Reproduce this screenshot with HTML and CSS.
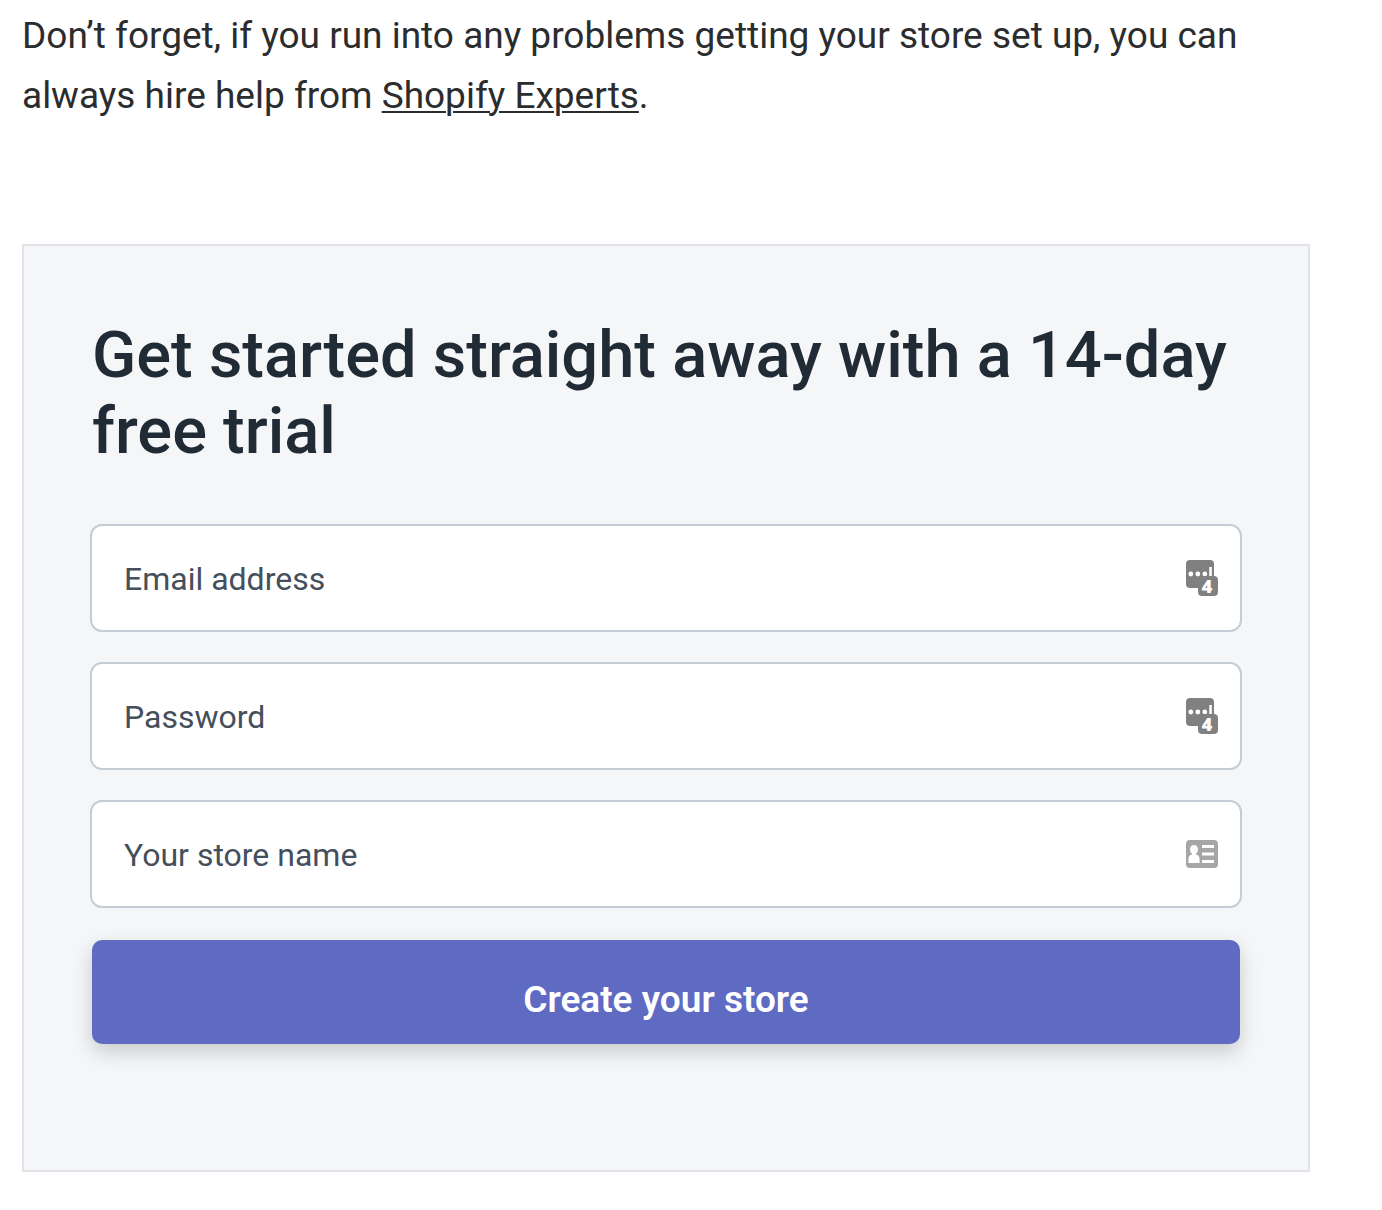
FILE: index.html
```html
<!DOCTYPE html>
<html lang="en">
<head>
  <meta charset="utf-8">
  <meta name="viewport" content="width=device-width, initial-scale=1">
  <title>Start your free trial</title>
  <link rel="stylesheet" href="styles.css">
</head>
<body>
  <main class="article">
    <p class="article-text">Don’t forget, if you run into any problems getting your store set up, you can always hire help from <a class="article-link" href="#experts">Shopify Experts</a>.</p>

    <section class="signup">
      <h2 class="signup-title">Get started straight away with a 14-day free trial</h2>
      <form class="signup-form">
        <div class="field">
          <input class="field-input" type="email" placeholder="Email address" aria-label="Email address">
          <svg class="field-icon" viewBox="0 0 32 36" aria-hidden="true">
            <rect width="28" height="28" rx="4" fill="#808080"/>
            <circle cx="4.800" cy="14" r="2.400" fill="#fff"/>
            <circle cx="11.800" cy="14" r="2.400" fill="#fff"/>
            <circle cx="18.800" cy="14" r="2.400" fill="#fff"/>
            <path d="M23.300 7h2.500v9h-2.500z" fill="#fff"/>
            <rect x="12" y="16" width="20" height="20" rx="4" fill="#808080"/>
            <text class="icon-count" x="21" y="33">4</text>
          </svg>
        </div>
        <div class="field">
          <input class="field-input" type="password" placeholder="Password" aria-label="Password">
          <svg class="field-icon" viewBox="0 0 32 36" aria-hidden="true">
            <rect width="28" height="28" rx="4" fill="#808080"/>
            <circle cx="4.800" cy="14" r="2.400" fill="#fff"/>
            <circle cx="11.800" cy="14" r="2.400" fill="#fff"/>
            <circle cx="18.800" cy="14" r="2.400" fill="#fff"/>
            <path d="M23.300 7h2.500v9h-2.500z" fill="#fff"/>
            <rect x="12" y="16" width="20" height="20" rx="4" fill="#808080"/>
            <text class="icon-count" x="21" y="33">4</text>
          </svg>
        </div>
        <div class="field">
          <input class="field-input" type="text" placeholder="Your store name" aria-label="Your store name">
          <svg class="field-icon" viewBox="0 0 32 36" aria-hidden="true">
            <rect y="4" width="32" height="28" rx="4" fill="#a6a6a6"/>
            <path d="M8 9c2.500 0 4 1.900 4 4.500 0 1.800-.9 3.300-2 4.200v.8c2.200.6 3.600 2 3.600 5.200V27H2.400v-3.300c0-3.200 1.400-4.600 3.600-5.200v-.8c-1.100-.9-2-2.400-2-4.200C4 10.900 5.500 9 8 9z" fill="#fff"/>
            <path d="M16 9h12v3H16zM16 16.500h12v3H16zM16 24h12v3H16z" fill="#fff"/>
          </svg>
        </div>
        <button class="signup-button" type="submit">Create your store</button>
      </form>
    </section>
  </main>
</body>
</html>
```
FILE: styles.css
```css
* {
  box-sizing: border-box;
}

body {
  margin: 0;
  background: #fff;
  color: #2b2c2e;
  font-family: Roboto, "Liberation Sans", sans-serif;
}

.article {
  padding: 6px 72px 38px 22px;
}

.article-text {
  margin: 0 0 118px;
  font-size: 37px;
  line-height: 60px;
}

.article-link {
  color: inherit;
  text-decoration-thickness: 2px;
  text-underline-offset: 3px;
}

.signup {
  padding: 71px 66px 126px;
  border: 2px solid #dfe3e8;
  background: #f4f6f8;
}

.signup-title {
  margin: 0 2px 55px;
  color: #212b36;
  font-size: 65px;
  font-weight: 500;
  line-height: 76px;
}

.signup-form {
  display: flex;
  flex-direction: column;
  gap: 30px;
}

.field {
  position: relative;
}

.field-input {
  display: block;
  width: 100%;
  height: 108px;
  padding: 2px 80px 0 32px;
  border: 2px solid #c4cdd5;
  border-radius: 12px;
  background: #fff;
  color: #212b36;
  font: 400 32px/40px Roboto, "Liberation Sans", sans-serif;
}

.field-input::placeholder {
  color: #454f5b;
  opacity: 1;
}

.field-icon {
  position: absolute;
  top: 36px;
  right: 24px;
  width: 32px;
  height: 36px;
}

.icon-count {
  fill: #fff;
  font: 800 18px "Open Sans", "Liberation Sans", sans-serif;
  text-anchor: middle;
}

.signup-button {
  height: 104px;
  margin: 2px 2px 0;
  padding: 16px 32px 0;
  border: 0;
  border-radius: 10px;
  background: #5f6ac3;
  box-shadow: 0 8px 20px rgba(0, 0, 0, 0.18);
  color: #fff;
  font: 600 37px/44px Roboto, "Liberation Sans", sans-serif;
}
```
